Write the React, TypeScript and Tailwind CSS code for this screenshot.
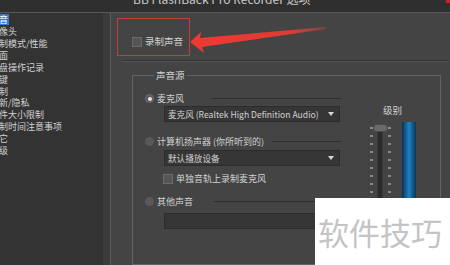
import React from "react";

const navItems = [
  "声音",
  "摄像头",
  "录制模式/性能",
  "画面",
  "键盘操作记录",
  "热键",
  "限制",
  "更新/隐私",
  "文件大小限制",
  "录制时间注意事项",
  "其它",
  "高级",
];

function Radio({ checked }: { checked?: boolean }) {
  return checked ? (
    <div className="w-[9px] h-[9px] rounded-full bg-[#5a5a5a] border border-[#6e6e6e] flex items-center justify-center shrink-0">
      <div className="w-[4px] h-[4px] rounded-full bg-[#e8e8e8]" />
    </div>
  ) : (
    <div className="w-[9px] h-[9px] rounded-full bg-[#595959] shrink-0" />
  );
}

function Checkbox() {
  return <div className="w-[10px] h-[10px] bg-[#555555] border border-[#6a6a6a] shrink-0" />;
}

function Select({ text }: { text?: string }) {
  return (
    <div className="ml-[19px] w-[176px] h-[16px] bg-[#363636] border border-[#2c2c2c] flex items-center pl-[3px] pr-[5px]">
      <span className="flex-1 whitespace-nowrap overflow-hidden text-[8.6px]">{text}</span>
      {text !== undefined && (
        <svg width="6" height="4" viewBox="0 0 6 4" className="shrink-0">
          <path d="M0 0H6L3 4Z" fill="#d8d8d8" />
        </svg>
      )}
    </div>
  );
}

export default function App() {
  const ticks = Array.from({ length: 10 });
  return (
    <div
      className="w-[450px] h-[265px] overflow-hidden bg-[#444444] relative flex flex-col text-[#d2d2d2] text-[9px] leading-[11px]"
      style={{ fontFamily: '"Noto Sans CJK SC", "Noto Sans", sans-serif' }}
    >
      {/* title bar */}
      <div className="h-[13px] shrink-0 bg-[#2f2f2f] border-b border-[#585858] overflow-hidden">
        <div className="pl-[133px] -mt-[8px] text-[12px] leading-[13px] text-[#c8c8c8] whitespace-nowrap">
          BB FlashBack Pro Recorder 选项
        </div>
      </div>

      <div className="flex flex-1 min-h-0">
        {/* left nav */}
        <div className="w-[103px] shrink-0 bg-[#333333] overflow-hidden pt-[1px]">
          <div className="-ml-[10px] flex flex-col">
            {navItems.map((t, i) => (
              <div key={t} className="h-[11.86px] flex items-center whitespace-nowrap">
                <span className={i === 0 ? "bg-[#3a78c9] text-white pr-[1px]" : ""}>{t}</span>
              </div>
            ))}
          </div>
        </div>
        <div className="w-[7px] shrink-0 bg-[#3b3b3b]" />

        {/* main */}
        <div className="flex-1 border-l border-[#5a5a5a] flex flex-col">
          <div className="ml-[6px] mt-[5px] w-[73px] h-[38px] border border-[#c0403a] flex items-end pb-[8px] pl-[14px] gap-[3px]">
            <Checkbox />
            <span className="text-[9.5px] leading-[11px]">录制声音</span>
          </div>
          <div className="ml-[12px] mr-[2px] mt-[4px] h-[2px] border-t border-[#333333] border-b border-b-[#555555]" />

          <fieldset className="ml-[21px] w-[309px] mt-[7px] border border-[#626262] pl-[12px] pr-0 pt-[12px] pb-[20px] min-w-0">
            <legend className="ml-[9px] px-[2px] text-[9.5px] leading-[12px]">声音源</legend>
            <div className="flex">
              <div className="w-[196px] flex flex-col">
                <div className="flex items-center h-[11px]">
                  <Radio checked />
                  <span className="ml-[3px]">麦克风</span>
                  <div className="ml-[28px] flex-1 h-px bg-[#2e2e2e]" />
                </div>
                <div className="mt-[2px]">
                  <Select text="麦克风 (Realtek High Definition Audio)" />
                </div>
                <div className="flex items-center h-[11px] mt-[14px]">
                  <Radio />
                  <span className="ml-[3px]">计算机扬声器 (你所听到的)</span>
                  <div className="ml-[8px] flex-1 h-px bg-[#2e2e2e]" />
                </div>
                <div className="mt-[3px]">
                  <Select text="默认播放设备" />
                </div>
                <div className="flex items-center h-[11px] mt-[7px] ml-[18px] gap-[3px]">
                  <Checkbox />
                  <span>单独音轨上录制麦克风</span>
                </div>
                <div className="flex items-center h-[11px] mt-[12px]">
                  <Radio />
                  <span className="ml-[3px]">其他声音</span>
                  <div className="ml-[21px] flex-1 h-px bg-[#2e2e2e]" />
                </div>
                <div className="mt-[6px]">
                  <div className="ml-[19px] w-[176px] h-[16px] bg-[#363636] border border-[#2c2c2c]" />
                </div>
              </div>

              {/* level */}
              <div className="ml-[27px] mt-[12px] flex flex-col w-[50px]">
                <div className="pl-[15px] text-[9.5px] leading-[11px]">级别</div>
                <div className="flex mt-[6px]">
                  <div className="relative w-[24px] h-[120px] mt-[2px]">
                    <div className="absolute left-[9px] top-[1px] w-[6px] h-[119px] bg-[#2b2b2b] border border-[#3a3a3a]" />
                    <div className="absolute left-[5px] top-0 w-[15px] h-[8px] rounded-full bg-[#6a6a6a] border border-[#4c4c4c]" />
                    <div className="absolute left-[2px] top-[3px] flex flex-col gap-[6px]">
                      {ticks.map((_, i) => (
                        <div key={i} className="w-[3px] h-[2px] bg-[#8a8a8a]" />
                      ))}
                    </div>
                    <div className="absolute left-[20px] top-[3px] flex flex-col gap-[6px]">
                      {ticks.map((_, i) => (
                        <div key={i} className="w-[3px] h-[2px] bg-[#8a8a8a]" />
                      ))}
                    </div>
                  </div>
                  <div className="ml-[10px] w-[14px] h-[120px] bg-gradient-to-r from-[#0c3554] via-[#1b82c6] to-[#0c3554]" />
                </div>
              </div>
            </div>
          </fieldset>
        </div>
      </div>

      {/* close button hint */}
      <div className="absolute right-0 top-0 w-[4px] h-[3px] bg-[#d02020]" />

      {/* red arrow annotation */}
      <svg className="absolute left-0 top-0 pointer-events-none" width="450" height="265" viewBox="0 0 450 265">
        <defs>
          <linearGradient id="ar" x1="190" y1="0" x2="326" y2="0" gradientUnits="userSpaceOnUse">
            <stop offset="0" stopColor="#ee3a33" />
            <stop offset="0.75" stopColor="#e23a35" />
            <stop offset="1" stopColor="#c44a48" stopOpacity="0.4" />
          </linearGradient>
        </defs>
        <polygon points="190,42 201,32 200,38 326,27 326,29 202,47 204,53" fill="url(#ar)" />
      </svg>

      {/* watermark */}
      <div className="absolute left-[315px] top-[198px] w-[135px] h-[67px] bg-white flex items-center pl-[3px]">
        <span className="text-[31px] leading-[34px] text-[#c4c4c4] whitespace-nowrap">软件技巧</span>
      </div>
    </div>
  );
}
